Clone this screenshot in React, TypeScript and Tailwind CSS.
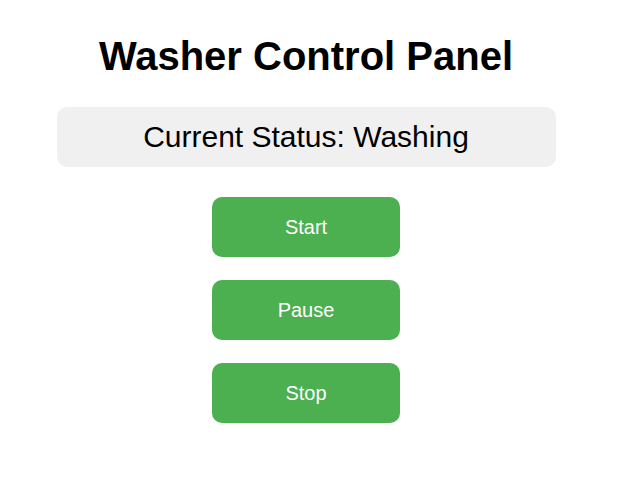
export default function App() {
  const font = { fontFamily: '"Liberation Sans", Arial, sans-serif' };
  return (
    <div className="w-[612px] flex flex-col items-center bg-white text-black" style={font}>
      <h1 className="mt-[33px] text-[40px] leading-[46px] font-bold">Washer Control Panel</h1>
      <div className="mt-[28px] w-[499px] h-[60px] rounded-[10px] bg-[#f0f0f0] flex items-center justify-center">
        <span className="text-[30px] leading-[34px]">Current Status: Washing</span>
      </div>
      <div className="mt-[30px] flex flex-col items-center gap-[23px]">
        {["Start", "Pause", "Stop"].map((l) => (
          <button
            key={l}
            className="w-[188px] h-[60px] rounded-[10px] bg-[#4caf50] text-white text-[20px] flex items-center justify-center"
          >
            {l}
          </button>
        ))}
      </div>
    </div>
  );
}
